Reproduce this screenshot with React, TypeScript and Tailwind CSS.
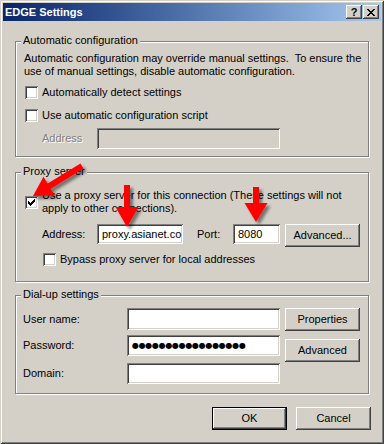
import React from "react";

const raised =
  "bg-[#D4D0C8] shadow-[inset_-1px_-1px_0_#404040,inset_1px_1px_0_#fff,inset_-2px_-2px_0_#808080,inset_2px_2px_0_#D4D0C8]";
const sunken =
  "shadow-[inset_1px_1px_0_#808080,inset_-1px_-1px_0_#fff,inset_2px_2px_0_#404040,inset_-2px_-2px_0_#D4D0C8]";
const group =
  "border border-[#808080] shadow-[1px_1px_0_#fff,inset_1px_1px_0_#fff]";

const Check = ({ checked = false }: { checked?: boolean }) => (
  <div className={`w-[13px] h-[13px] shrink-0 bg-white ${sunken}`}>
    {checked && (
      <svg width="13" height="13" shapeRendering="crispEdges">
        {[2, 3, 4, 3, 2, 1, 0].map((y, i) => (
          <rect key={i} x={3 + i} y={3 + y} width="1" height="3" fill="#000" />
        ))}
      </svg>
    )}
  </div>
);

const Legend = ({ children }: { children: React.ReactNode }) => (
  <div className="ml-[5px] -mt-[8px] w-fit px-[2px] bg-[#D4D0C8] leading-[13px]">
    {children}
  </div>
);

const Btn = ({
  label,
  className = "",
}: {
  label: string;
  className?: string;
}) => (
  <div
    className={`w-[75px] h-[23px] flex items-center justify-center shrink-0 ${raised} ${className}`}
  >
    {label}
  </div>
);

// arrow polygon from tail to tip
function arrowPts(
  x1: number,
  y1: number,
  x2: number,
  y2: number,
  sw: number,
  hl: number,
  hw: number
) {
  const dx = x2 - x1;
  const dy = y2 - y1;
  const L = Math.hypot(dx, dy);
  const ux = dx / L;
  const uy = dy / L;
  const px = -uy;
  const py = ux;
  const bx = x2 - ux * hl;
  const by = y2 - uy * hl;
  const p = [
    [x1 + (px * sw) / 2, y1 + (py * sw) / 2],
    [bx + (px * sw) / 2, by + (py * sw) / 2],
    [bx + (px * hw) / 2, by + (py * hw) / 2],
    [x2, y2],
    [bx - (px * hw) / 2, by - (py * hw) / 2],
    [bx - (px * sw) / 2, by - (py * sw) / 2],
    [x1 - (px * sw) / 2, y1 - (py * sw) / 2],
  ];
  return p.map((q) => q.join(",")).join(" ");
}

const arrows = [
  arrowPts(82, 166, 33, 196, 6, 19, 22),
  arrowPts(127, 185, 127, 227, 6, 20, 23),
  arrowPts(256, 187, 256, 222, 6, 19, 23),
];

export default function App() {
  return (
    <div className="relative w-[384px] h-[444px] p-[3px] flex flex-col bg-[#D4D0C8] text-[11px] leading-[13px] text-black font-['Liberation_Sans',Arial,sans-serif] shadow-[inset_1px_1px_0_#D4D0C8,inset_-1px_-1px_0_#404040,inset_2px_2px_0_#fff,inset_-2px_-2px_0_#808080] overflow-hidden">
      {/* title bar */}
      <div className="h-[18px] shrink-0 flex items-center pl-[2px] pr-[2px] bg-linear-to-r from-[#0A246A] to-[#A6CAF0]">
        <span className="font-bold text-white">EDGE Settings</span>
        <div className="ml-auto flex gap-[1px]">
          <div
            className={`w-[16px] h-[14px] flex items-center justify-center font-bold text-[11px] leading-[14px] ${raised}`}
          >
            ?
          </div>
          <div className={`w-[16px] h-[14px] flex items-center justify-center ${raised}`}>
            <svg width="8" height="7" shapeRendering="crispEdges">
              {[0, 1, 2, 3, 2, 1, 0].map((o, r) => (
                <g key={r}>
                  <rect x={o} y={r} width="2" height="1" fill="#000" />
                  <rect x={6 - o} y={r} width="2" height="1" fill="#000" />
                </g>
              ))}
            </svg>
          </div>
        </div>
      </div>

      {/* Automatic configuration */}
      <div className={`mt-[20px] ml-[12px] w-[354px] h-[116px] shrink-0 ${group}`}>
        <Legend>Automatic configuration</Legend>
        <div className="mt-[5px] pl-[8px] whitespace-pre">
          {"Automatic configuration may override manual settings.  To ensure the"}
          <br />
          {"use of manual settings, disable automatic configuration."}
        </div>
        <div className="mt-[8px] pl-[9px] h-[13px] flex items-center gap-[4px]">
          <Check />
          <span>Automatically detect settings</span>
        </div>
        <div className="mt-[10px] pl-[9px] h-[13px] flex items-center gap-[4px]">
          <Check />
          <span>Use automatic configuration script</span>
        </div>
        <div className="mt-[6px] pl-[26px] flex items-center">
          <span className="w-[55px] text-[#808080] [text-shadow:1px_1px_0_#fff]">Address</span>
          <div className={`w-[183px] h-[21px] bg-[#D4D0C8] ${sunken}`} />
        </div>
      </div>

      {/* Proxy server */}
      <div className={`mt-[15px] ml-[12px] w-[354px] h-[110px] shrink-0 ${group}`}>
        <Legend>Proxy server</Legend>
        <div className="mt-[11px] pl-[9px] flex items-center gap-[4px]">
          <Check checked />
          <span className="whitespace-nowrap">
            Use a proxy server for this connection (These settings will not
            <br />
            apply to other connections).
          </span>
        </div>
        <div className="mt-[9px] pl-[26px] flex items-start">
          <span className="w-[55px] h-[20px] flex items-center">Address:</span>
          <div className={`w-[86px] h-[20px] bg-white pl-[5px] flex items-center overflow-hidden whitespace-nowrap ${sunken}`}>
            proxy.asianet.co
          </div>
          <span className="ml-[14px] w-[36px] h-[20px] flex items-center">Port:</span>
          <div className={`w-[47px] h-[20px] bg-white pl-[5px] flex items-center ${sunken}`}>
            8080
          </div>
          <Btn label="Advanced..." className="ml-[5px]" />
        </div>
        <div className="mt-[6px] pl-[27px] h-[13px] flex items-center gap-[4px]">
          <Check />
          <span>Bypass proxy server for local addresses</span>
        </div>
      </div>

      {/* Dial-up settings */}
      <div className={`mt-[13px] ml-[12px] w-[354px] h-[99px] shrink-0 ${group}`}>
        <Legend>Dial-up settings</Legend>
        <div className="mt-[7px] pl-[7px] flex items-start">
          <div className="flex flex-col">
            <div className="h-[22px] flex items-center">
              <span className="w-[104px]">User name:</span>
              <div className={`w-[153px] h-[22px] bg-white ${sunken}`} />
            </div>
            <div className="mt-[5px] h-[21px] flex items-center">
              <span className="w-[104px]">Password:</span>
              <div className={`w-[153px] h-[21px] bg-white pl-[5px] flex items-center overflow-hidden ${sunken}`}>
                <span className="text-[8px] tracking-[-0.3px] font-['DejaVu_Sans',sans-serif] whitespace-nowrap">
                  ●●●●●●●●●●●●●●●●●
                </span>
              </div>
            </div>
            <div className="mt-[7px] h-[21px] flex items-center">
              <span className="w-[104px]">Domain:</span>
              <div className={`w-[153px] h-[21px] bg-white ${sunken}`} />
            </div>
          </div>
          <div className="ml-[5px] flex flex-col">
            <Btn label="Properties" />
            <Btn label="Advanced" className="mt-[8px]" />
          </div>
        </div>
      </div>

      {/* bottom buttons */}
      <div className="mt-[13px] pr-[10px] flex justify-end gap-[9px]">
        <Btn label="OK" className="border border-black" />
        <Btn label="Cancel" />
      </div>

      {/* red annotation arrows */}
      <svg
        className="absolute left-0 top-0 pointer-events-none"
        width="384"
        height="444"
      >
        <defs>
          <filter id="sh" x="-50%" y="-50%" width="200%" height="200%">
            <feDropShadow dx="3" dy="3" stdDeviation="1.6" floodColor="#000" floodOpacity="0.45" />
          </filter>
        </defs>
        {arrows.map((pts, i) => (
          <polygon key={i} points={pts} fill="#FF0000" filter="url(#sh)" />
        ))}
      </svg>
    </div>
  );
}
